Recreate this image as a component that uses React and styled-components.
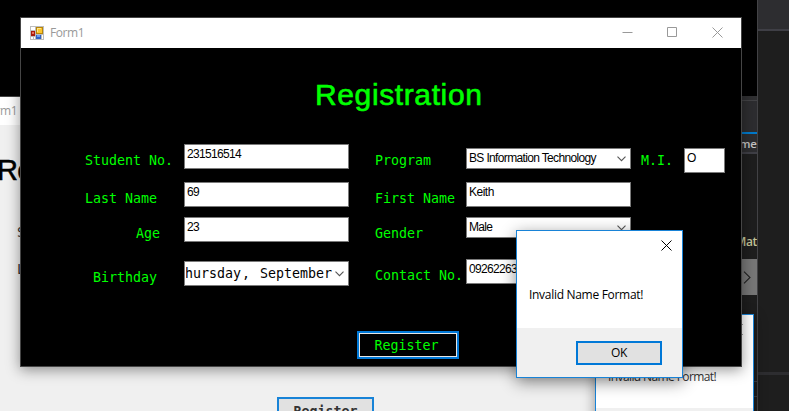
import React from "react";
import styled, { createGlobalStyle } from "styled-components";

const mono = '"DejaVu Sans Mono", monospace';
const sans = '"Liberation Sans", Arial, sans-serif';
const ui = '"Open Sans", "Noto Sans", sans-serif';

const GlobalStyle = createGlobalStyle`
  * { box-sizing: border-box; }
  body { margin: 0; background: #000; overflow: hidden; }
  button { margin: 0; padding: 0; }
`;

const Desktop = styled.main`
  position: relative;
  width: 789px;
  height: 411px;
  overflow: hidden;
  background: #000;
`;

/* Editor behind the windows */
const EditorStrip = styled.section`
  position: absolute;
  left: 700px;
  top: 96px;
  width: 57px;
  height: 315px;
  background: #1e1e1e;
  display: flex;
  flex-direction: column;
  align-items: stretch;
`;
const StripEdge = styled.div`
  height: 5px;
  flex: none;
  background: #303032;
  border-bottom: 1px solid #434346;
`;
const StripHeader = styled.div`
  height: 31px;
  flex: none;
  background: #2d2d30;
`;
const StripTab = styled.div`
  height: 22px;
  flex: none;
  background: #2d2d30;
  border-top: 2px solid #007acc;
  border-bottom: 2px solid #3f3f46;
  color: #c4c4c4;
  font: 600 11.5px/20px ${ui};
  text-align: right;
`;
const StripCode = styled.div`
  height: 105px;
  flex: none;
  padding-top: 79px;
  color: #c5c69a;
  font: 600 12px/18px ${ui};
  letter-spacing: -0.3px;
  text-align: right;
`;
const StripButton = styled.div`
  height: 36px;
  flex: none;
  background: #777;
  display: flex;
  justify-content: flex-end;
  align-items: center;
  padding-right: 6px;
`;
const StripLines = styled.div`
  margin-top: 86px;
  height: 16px;
  flex: none;
  border-top: 1px solid #3f3f46;
  border-bottom: 1px solid #3f3f46;
`;
const EditorSide = styled.section`
  position: absolute;
  left: 757px;
  top: 0;
  width: 32px;
  height: 411px;
  display: flex;
  flex-direction: column;
  background: #1e1e1e;
  border-left: 1px solid #434346;
`;
const SideHeader = styled.div`
  height: 31px;
  flex: none;
  background: #2d2d30;
  border-bottom: 2px solid #3f3f46;
`;
const SideDivider = styled.div`
  margin-top: 341px;
  height: 3px;
  flex: none;
  background: #2d2d30;
`;

/* Windows */
const Window = styled.section`
  position: absolute;
  left: ${(p) => p.$x}px;
  top: ${(p) => p.$y}px;
  width: ${(p) => p.$w}px;
  height: ${(p) => p.$h}px;
  display: flex;
  flex-direction: column;
  overflow: hidden;
  background: ${(p) => p.$bg};
  border: 1px solid ${(p) => p.$edge};
  box-shadow: ${(p) => p.$shadow || "none"};
`;
const TitleBar = styled.header`
  height: ${(p) => p.$h}px;
  flex: none;
  display: flex;
  align-items: center;
  padding-left: ${(p) => p.$pad}px;
  background: #fff;
`;
const TitleText = styled.span`
  flex: 1;
  margin-left: ${(p) => p.$left}px;
  color: #999;
  font: 400 12px/16px ${ui};
  letter-spacing: -0.4px;
`;
const Controls = styled.div`
  display: flex;
  align-items: center;
  height: 100%;
  padding: 0 1px 2px 0;
`;
const Control = styled.div`
  width: 45px;
  display: flex;
  justify-content: center;
  padding-right: ${(p) => p.$nudge || 0}px;
  & svg { display: block; }
`;

const OldForm = styled.div`
  display: flex;
  flex-direction: column;
  align-items: flex-start;
  flex: 1;
`;
const OldHeading = styled.h2`
  margin: 28px 0 0 -3px;
  color: #000;
  font: 400 29px/34px ${sans};
  letter-spacing: -0.8px;
  -webkit-text-stroke: 0.5px #000;
`;
const OldLabel = styled.span`
  margin: ${(p) => p.$top}px 0 0 17px;
  color: #333;
  font: 400 13.3px/16px ${mono};
`;
const OldButton = styled.button`
  margin: 119px 0 0 277px;
  width: 97px;
  height: 28px;
  border: 2px solid #1883d7;
  background: #e1e1e1;
  color: #333;
  padding-top: 1px;
  font: 700 13.3px/20px ${mono};
`;

const FormBody = styled.div`
  flex: 1;
  display: flex;
  flex-direction: column;
  align-items: flex-start;
`;
const Heading = styled.h1`
  margin: 30px 0 0 294px;
  height: 34px;
  color: #0f0;
  font: 400 30px/34px ${sans};
  letter-spacing: 0.62px;
  -webkit-text-stroke: 0.6px #0f0;
  white-space: nowrap;
`;
const Fields = styled.div`
  display: flex;
  margin-top: 32px;
  height: 142px;
`;
const Column = styled.div`
  width: ${(p) => p.$w}px;
  margin-left: ${(p) => p.$left || 0}px;
  flex: none;
  display: flex;
  flex-direction: column;
`;
const Label = styled.label`
  margin: ${(p) => p.$top}px 0 0 ${(p) => p.$indent || 0}px;
  height: 16px;
  color: #0f0;
  font: 400 13.3px/16px ${mono};
  white-space: pre;
`;
const Field = styled.div`
  margin-top: ${(p) => p.$top}px;
  width: 100%;
  height: ${(p) => p.$h || 25}px;
  flex: none;
  display: flex;
  align-items: flex-start;
  justify-content: space-between;
  overflow: hidden;
  border: 1px solid #7a7a7a;
  background: #fff;
  color: #000;
  padding: 2px 4px 0 2px;
  font: 400 12px/14px ${sans};
  letter-spacing: ${(p) => p.$track || -0.68}px;
  white-space: pre;
  & svg { flex: none; margin-top: 5px; }
`;
const DateField = styled(Field)`
  padding: 0 4px 0 1px;
  align-items: center;
  font: 400 13.3px/22px ${mono};
  letter-spacing: 0;
  & svg { margin-top: 1px; }
`;
const DateText = styled.span`
  width: 146px;
  height: 22px;
  display: flex;
  justify-content: flex-end;
  overflow: hidden;
`;
const DatePart = styled.span`
  margin-right: ${(p) => p.$gap || 0}px;
`;
const RegisterButton = styled.button`
  margin: 45px 0 0 336px;
  width: 102px;
  height: 28px;
  border: 2px solid #0078d7;
  outline: 1px solid #e6e6e6;
  outline-offset: -3px;
  background: #000;
  color: #0f0;
  padding: 1px 3px 0 0;
  font: 400 13.3px/20px ${mono};
`;

const DialogTop = styled.div`
  height: ${(p) => p.$h}px;
  flex: none;
  background: #fff;
  display: flex;
  flex-direction: column;
`;
const DialogClose = styled.div`
  display: flex;
  justify-content: flex-end;
  padding: 9px 10px 0 0;
`;
const Message = styled.p`
  margin: ${(p) => p.$top}px 0 0 12px;
  color: ${(p) => p.$color};
  font: 400 12px/18px ${ui};
  letter-spacing: ${(p) => p.$track}px;
  white-space: nowrap;
`;
const DialogFooter = styled.div`
  flex: 1;
  background: #f0f0f0;
  padding: 13px 0 0 59px;
`;
const OkButton = styled.button`
  display: block;
  width: 86px;
  height: 24px;
  border: 2px solid #0078d7;
  background: #e1e1e1;
  color: #000;
  font: 400 12px/18px ${ui};
  letter-spacing: -0.3px;
`;

const Chevron = () => (
  <svg width="9" height="6" viewBox="0 0 9 6" fill="none" stroke="#555" strokeWidth="1.1">
    <path d="M.5.7 4.5 4.7 8.5.7" />
  </svg>
);
const Cross = ({ color }) => (
  <svg width="11" height="11" viewBox="0 0 11 11" fill="none" stroke={color} strokeWidth="1">
    <path d="M.5.5l10 10M10.5.5l-10 10" />
  </svg>
);
const FormIcon = () => (
  <svg width="14" height="14" viewBox="0 0 14 14" shapeRendering="crispEdges">
    <path fill="#bdbdbd" d="M0 0h14v14H0z" />
    <path fill="#fff" d="M1 1h4v3H1zM1 11h2v2H1zM4 11h1v2H4zM12 9h1v4h-1z" />
    <path fill="#a81c0c" d="M1 5h4v5H1z" />
    <path fill="#e8705c" d="M2 6h2v2H2z" />
    <path fill="#b8860b" d="M6 1h7v7H6z" />
    <path fill="#fcc62e" d="M7 2h5v5H7z" />
    <path fill="#ffe58a" d="M7 2h4v1H8v3H7z" />
    <path fill="#2f62c4" d="M6 9h5v4H6z" />
    <path fill="#6b9bee" d="M7 9h3v2H7z" />
  </svg>
);

export default function App() {
  return (
    <Desktop>
      <GlobalStyle />
      <EditorStrip>
        <StripEdge />
        <StripHeader />
        <StripTab>me</StripTab>
        <StripCode>Mat</StripCode>
        <StripButton>
          <svg width="8" height="13" viewBox="0 0 8 13" fill="none" stroke="#222" strokeWidth="1.1">
            <path d="M1 .7l6 5.8-6 5.8" />
          </svg>
        </StripButton>
        <StripLines />
      </EditorStrip>
      <EditorSide>
        <SideHeader />
        <SideDivider />
      </EditorSide>

      <Window $x={-1} $y={96} $w={660} $h={340} $bg="#f0f0f0" $edge="#444">
        <TitleBar $h={28} $pad={0}>
          <TitleText $left={-17}>Form1</TitleText>
        </TitleBar>
        <OldForm>
          <OldHeading>Re</OldHeading>
          <OldLabel $top={38}>S</OldLabel>
          <OldLabel $top={21}>L</OldLabel>
          <OldButton>Register</OldButton>
        </OldForm>
      </Window>
      <Window $x={595} $y={314} $w={159} $h={148} $bg="#f0f0f0" $edge="#1883d7" $shadow="0 3px 12px rgba(0,0,0,.4)">
        <DialogTop $h={93}>
          <DialogClose><Cross color="#333" /></DialogClose>
          <Message $top={33} $track={-0.6} $color="#333">Invalid Name Format!</Message>
        </DialogTop>
      </Window>

      <Window $x={20} $y={17} $w={722} $h={350} $bg="#000" $edge="#454545" $shadow="0 3px 13px rgba(0,0,0,.42)">
        <TitleBar $h={30} $pad={9}>
          <FormIcon />
          <TitleText $left={6}>Form1</TitleText>
          <Controls>
            <Control>
              <svg width="11" height="11" viewBox="0 0 11 11"><path stroke="#999" d="M.5 5.5h10" /></svg>
            </Control>
            <Control $nudge={1}>
              <svg width="10" height="10" viewBox="0 0 10 10"><path fill="none" stroke="#999" d="M.5.5h9v9h-9z" /></svg>
            </Control>
            <Control><Cross color="#999" /></Control>
          </Controls>
        </TitleBar>
        <FormBody>
          <Heading>Registration</Heading>
          <Fields>
            <Column $left={64} $w={99}>
              <Label $top={9}>Student No.</Label>
              <Label $top={22}>Last Name</Label>
              <Label $top={19} $indent={51}>Age</Label>
              <Label $top={28} $indent={8}>Birthday</Label>
            </Column>
            <Column $w={165}>
              <Field $top={0}>231516514</Field>
              <Field $top={13}>69</Field>
              <Field $top={10}>23</Field>
              <DateField $top={19}>
                <DateText>
                  <DatePart $gap={1}>Thursday</DatePart>
                  <DatePart $gap={10}>,</DatePart>
                  <DatePart>September</DatePart>
                </DateText>
                <Chevron />
              </DateField>
            </Column>
            <Column $left={26} $w={91}>
              <Label $top={9}>Program</Label>
              <Label $top={22}>First Name</Label>
              <Label $top={19}>Gender</Label>
              <Label $top={26}>Contact No.</Label>
            </Column>
            <Column $w={165}>
              <Field $top={4} $h={21} $track={-0.65}>BS Information Technology<Chevron /></Field>
              <Field $top={13} $track={-0.5}>Keith</Field>
              <Field $top={10} $h={21} $track={-0.7}>Male<Chevron /></Field>
              <Field $top={21}>09262263</Field>
            </Column>
            <Column $left={10} $w={43}>
              <Label $top={9}>M.I.</Label>
            </Column>
            <Column $w={41}>
              <Field $top={4}>O</Field>
            </Column>
          </Fields>
          <RegisterButton>Register</RegisterButton>
        </FormBody>
      </Window>

      <Window $x={516} $y={230} $w={167} $h={148} $bg="#f0f0f0" $edge="#1883d7" $shadow="0 4px 15px rgba(0,0,0,.45)">
        <DialogTop $h={97}>
          <DialogClose><Cross color="#000" /></DialogClose>
          <Message $top={35} $track={-0.3} $color="#000">Invalid Name Format!</Message>
        </DialogTop>
        <DialogFooter>
          <OkButton>OK</OkButton>
        </DialogFooter>
      </Window>
    </Desktop>
  );
}
